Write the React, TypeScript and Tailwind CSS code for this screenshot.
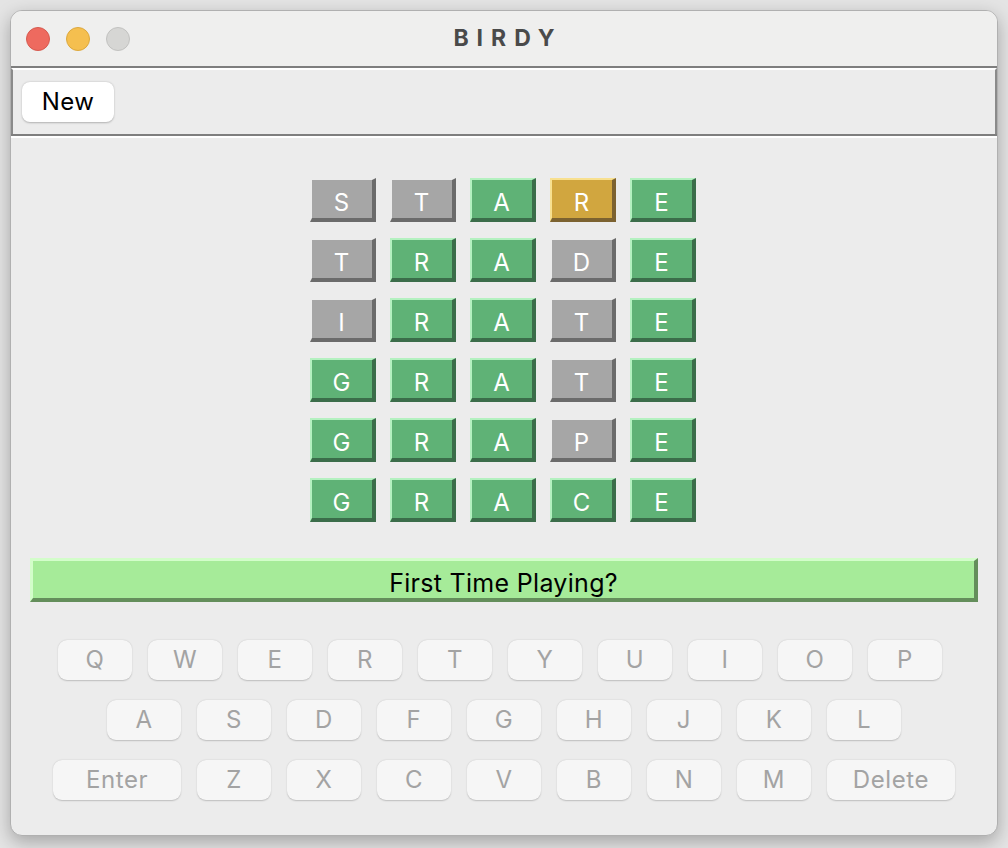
import React from "react";

type C = "x" | "g" | "y";

const rows: { w: string; c: C[] }[] = [
  { w: "STARE", c: ["x", "x", "g", "y", "g"] },
  { w: "TRADE", c: ["x", "g", "g", "x", "g"] },
  { w: "IRATE", c: ["x", "g", "g", "x", "g"] },
  { w: "GRATE", c: ["g", "g", "g", "x", "g"] },
  { w: "GRAPE", c: ["g", "g", "g", "x", "g"] },
  { w: "GRACE", c: ["g", "g", "g", "g", "g"] },
];

const tileCls: Record<C, string> = {
  x: "bg-[#a6a6a6] border-t-[#ececec] border-l-[#ececec] border-r-[#6b6b6b] border-b-[#6b6b6b]",
  g: "bg-[#5fb276] border-t-[#b4f1c0] border-l-[#b4f1c0] border-r-[#3b6d4a] border-b-[#3b6d4a]",
  y: "bg-[#d1a63f] border-t-[#f8e08f] border-l-[#f8e08f] border-r-[#7c6230] border-b-[#7c6230]",
};

function Key({ k, wide }: { k: string; wide?: boolean }) {
  return (
    <div
      className={`${wide ? "w-[128px]" : "w-[74px]"} h-[40px] rounded-[9px] bg-[#f6f6f6] shadow-[0_0.5px_1.5px_rgba(0,0,0,0.2)] flex items-center justify-center text-[24px] tracking-[0.6px] text-[#a3a3a3]`}
    >
      {k}
    </div>
  );
}

export default function App() {
  const font = { fontFamily: "Inter, 'Noto Sans', sans-serif" };
  return (
    <div
      className="w-[1008px] h-[848px] bg-[#e4e4e4] pt-[10px] pl-[10px] overflow-hidden"
      style={font}
    >
      <div className="w-[988px] h-[826px] rounded-[12px] border border-[#b0b0b0] bg-[#ececec] overflow-hidden shadow-[0_6px_18px_rgba(0,0,0,0.28)] flex flex-col">
        {/* title bar */}
        <div className="h-[55px] bg-[#efefee] relative flex items-center pl-[15px] gap-[16px]">
          <div className="w-[24px] h-[24px] rounded-full bg-[#ee6a5f] border border-[#d65a4f]" />
          <div className="w-[24px] h-[24px] rounded-full bg-[#f5bf4f] border border-[#dca83d]" />
          <div className="w-[24px] h-[24px] rounded-full bg-[#d6d6d4] border border-[#c2c2c0]" />
          <div className="absolute inset-0 flex items-center justify-center pointer-events-none">
            <span className="text-[23px] font-bold tracking-[8px] text-[#4a4a4a] pl-[8px]">BIRDY</span>
          </div>
        </div>
        {/* toolbar */}
        <div className="border-t-2 border-[#7e7e7e]">
          <div className="h-[66px] border-t-2 border-t-white border-l-2 border-l-[#8a8a8a] border-r-2 border-r-[#8a8a8a] flex items-center pl-[9px]">
            <div className="w-[92px] h-[40px] rounded-[8px] bg-white shadow-[0_0.5px_2px_rgba(0,0,0,0.25)] flex items-center justify-center text-[24px] tracking-[0.4px] text-black">
              New
            </div>
          </div>
          <div className="h-[2px] bg-[#7e7e7e]" />
          <div className="h-[2px] bg-white" />
        </div>
        {/* board */}
        <div className="flex flex-col items-center gap-[16px] pt-[40px] pr-[3px]">
          {rows.map((r, i) => (
            <div key={i} className="flex gap-[14px]">
              {r.w.split("").map((ch, j) => (
                <div
                  key={j}
                  className={`w-[66px] h-[44px] border-t-[2px] border-l-[2px] border-r-[4px] border-b-[4px] flex items-center justify-center pt-[8px] text-[24px] text-white ${tileCls[r.c[j]]}`}
                >
                  {ch}
                </div>
              ))}
            </div>
          ))}
        </div>
        {/* banner */}
        <div className="mx-[19px] mt-[36px] h-[44px] bg-[#a6eb99] border-t-[3px] border-l-[3px] border-t-[#d3fdca] border-l-[#d3fdca] border-r-[4px] border-b-[4px] border-r-[#648e5b] border-b-[#648e5b] flex items-center justify-center pt-[9px] text-[25px] tracking-[0.3px] text-black">
          First Time Playing?
        </div>
        {/* keyboard */}
        <div className="flex flex-col gap-[20px] mt-[38px]">
          <div className="flex justify-center gap-[16px] pr-[8px]">
            {"QWERTYUIOP".split("").map((k) => (
              <Key key={k} k={k} />
            ))}
          </div>
          <div className="flex justify-center gap-[16px]">
            {"ASDFGHJKL".split("").map((k) => (
              <Key key={k} k={k} />
            ))}
          </div>
          <div className="flex justify-center gap-[16px]">
            <Key k="Enter" wide />
            {"ZXCVBNM".split("").map((k) => (
              <Key key={k} k={k} />
            ))}
            <Key k="Delete" wide />
          </div>
        </div>
      </div>
    </div>
  );
}
